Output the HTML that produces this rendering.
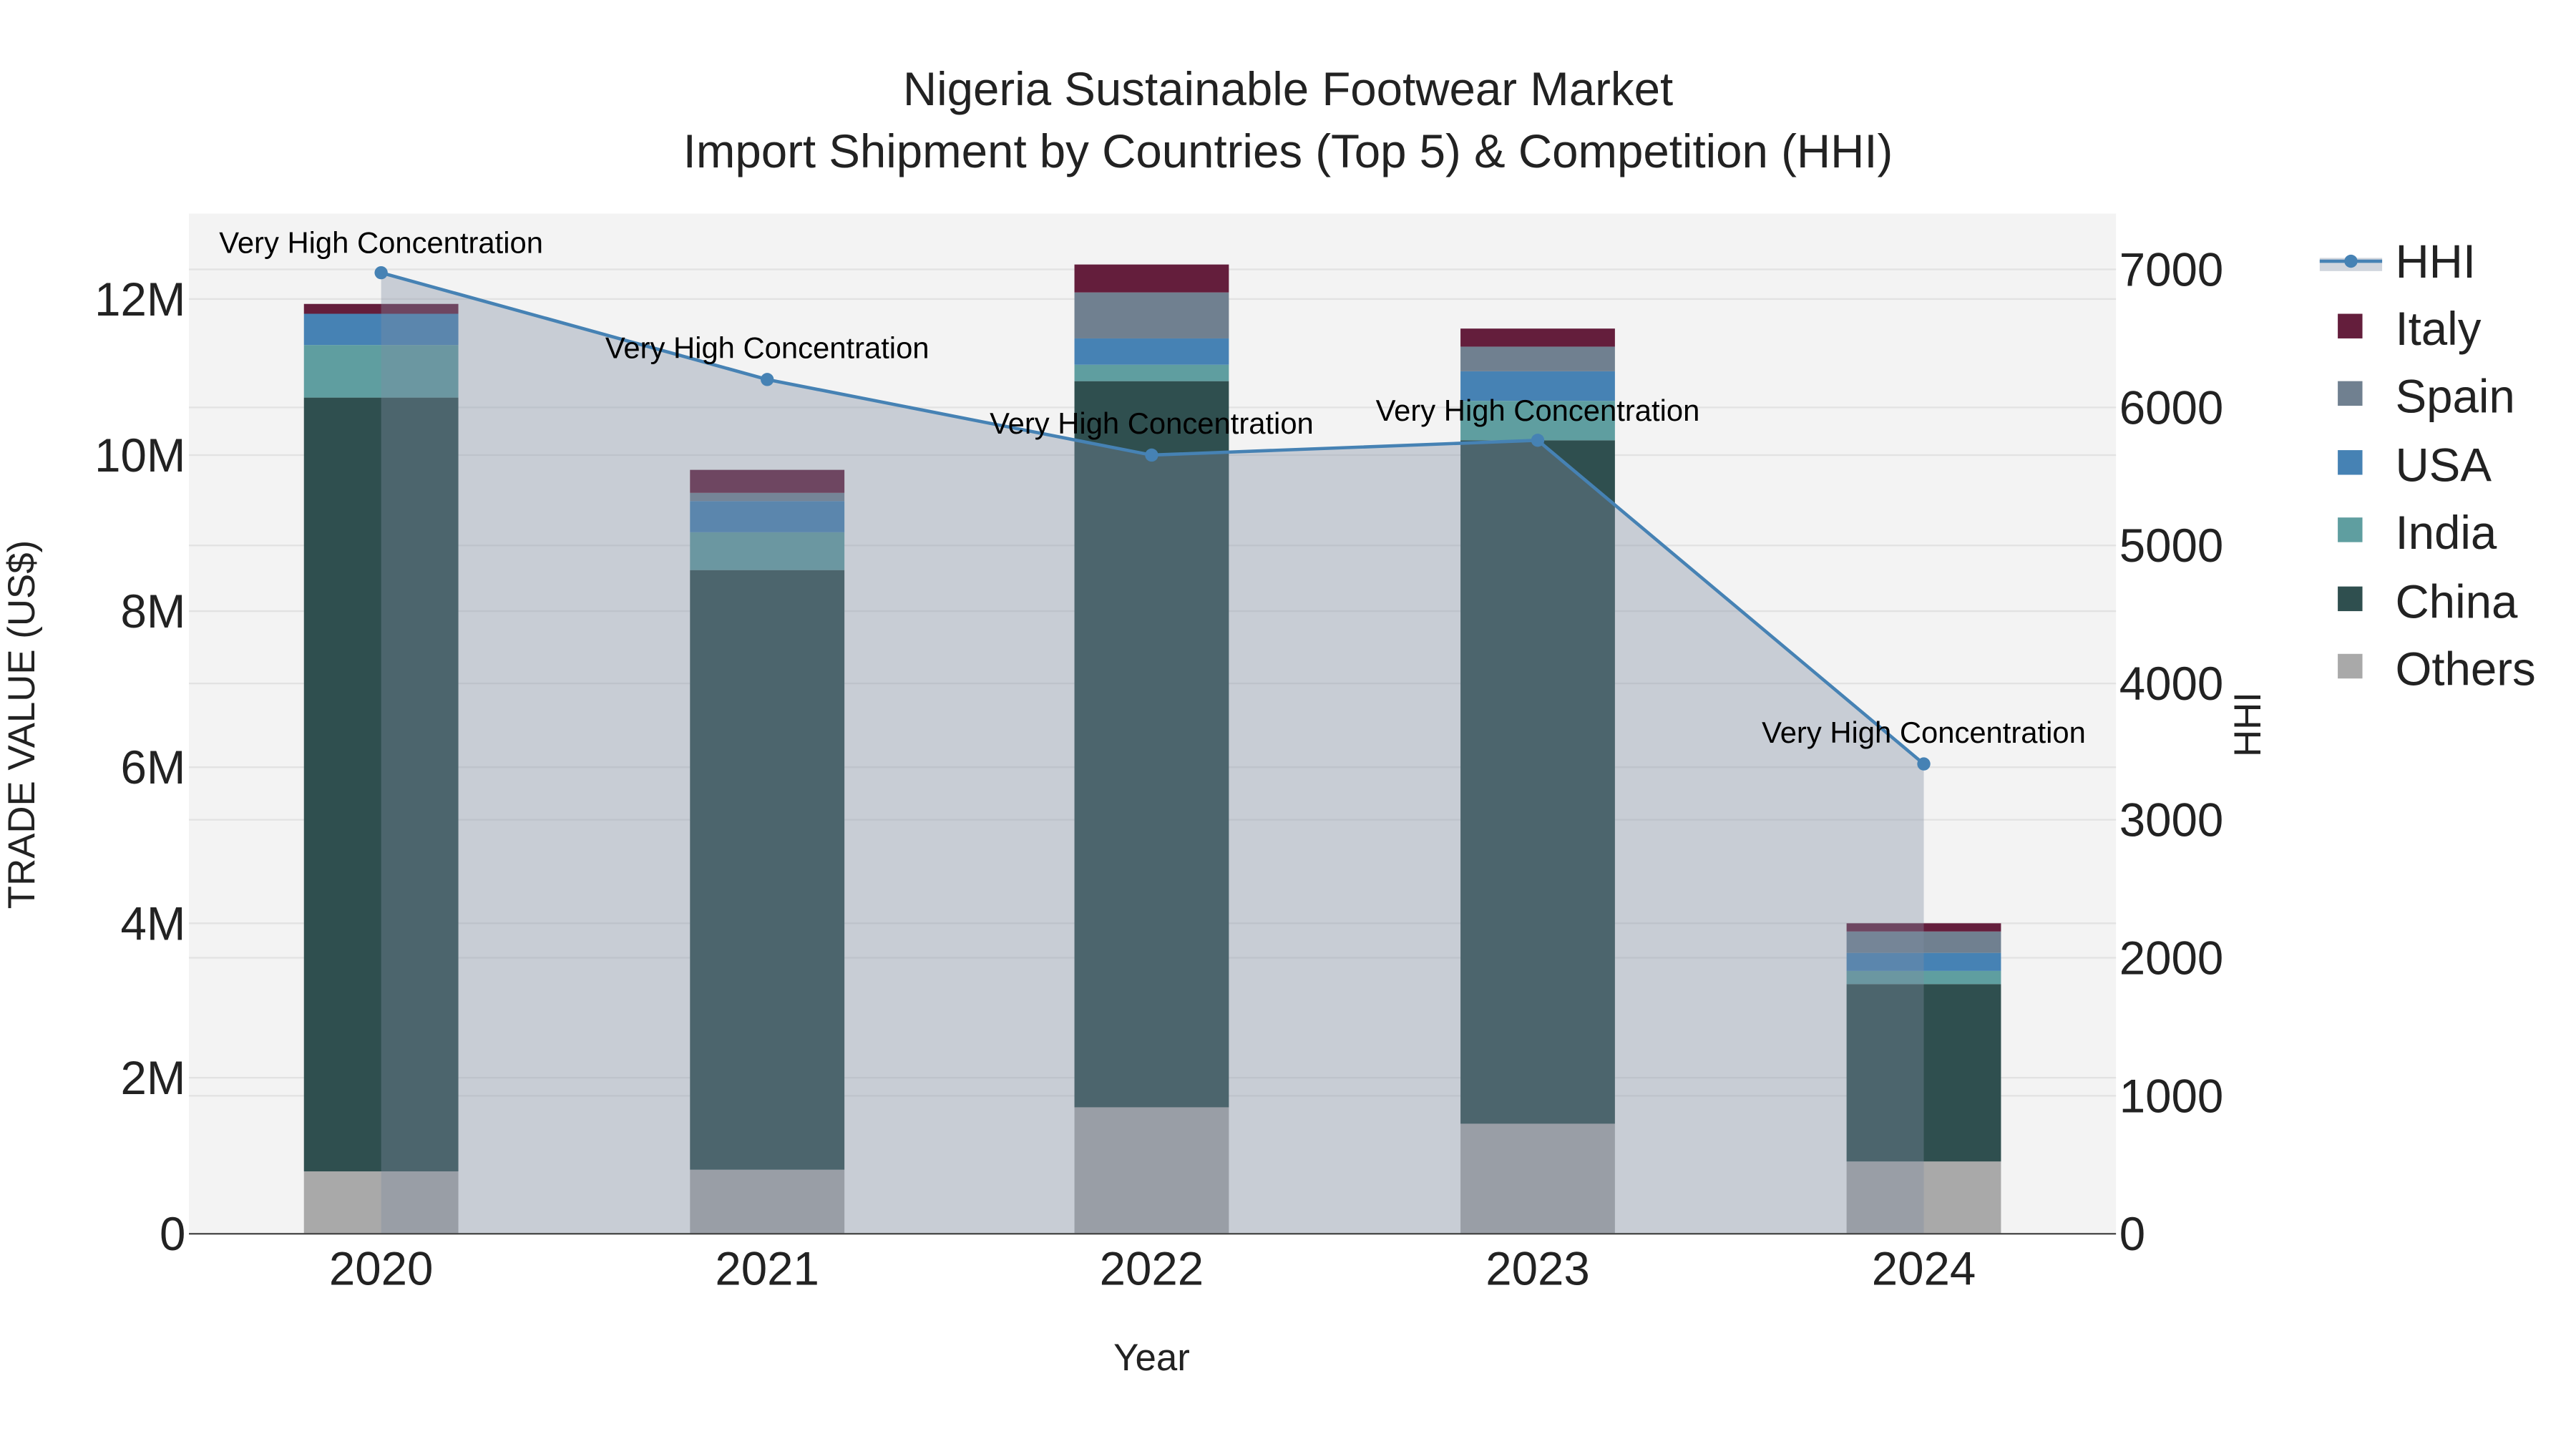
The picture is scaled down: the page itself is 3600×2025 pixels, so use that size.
<!DOCTYPE html>
<html><head><meta charset="utf-8"><style>html,body{margin:0;padding:0;background:#fff}svg{display:block}</style></head>
<body>
<svg width="3600" height="2025" viewBox="0 0 1568 882" preserveAspectRatio="xMinYMin meet" xmlns="http://www.w3.org/2000/svg" font-family="Liberation Sans, sans-serif">
<rect width="1568" height="882" fill="#fff"/>
<rect x="115" y="130" width="1173" height="621" fill="#f3f3f3"/>
<g stroke="#e2e2e2" stroke-width="1">
<line x1="115" x2="1288" y1="656" y2="656"/><line x1="115" x2="1288" y1="562" y2="562"/><line x1="115" x2="1288" y1="467" y2="467"/><line x1="115" x2="1288" y1="372" y2="372"/><line x1="115" x2="1288" y1="277" y2="277"/><line x1="115" x2="1288" y1="182" y2="182"/>
<line x1="115" x2="1288" y1="667" y2="667"/><line x1="115" x2="1288" y1="583" y2="583"/><line x1="115" x2="1288" y1="499" y2="499"/><line x1="115" x2="1288" y1="416" y2="416"/><line x1="115" x2="1288" y1="332" y2="332"/><line x1="115" x2="1288" y1="248" y2="248"/><line x1="115" x2="1288" y1="164" y2="164"/>
</g>
<g>
<rect x="185" y="713" width="94" height="38" fill="#a9a9a9"/><rect x="185" y="242" width="94" height="471" fill="#2f4f4f"/><rect x="185" y="210" width="94" height="32" fill="#5f9ea0"/><rect x="185" y="191" width="94" height="19" fill="#4682b4"/><rect x="185" y="185" width="94" height="6" fill="#641e3c"/>
<rect x="420" y="712" width="94" height="39" fill="#a9a9a9"/><rect x="420" y="347" width="94" height="365" fill="#2f4f4f"/><rect x="420" y="324" width="94" height="23" fill="#5f9ea0"/><rect x="420" y="305" width="94" height="19" fill="#4682b4"/><rect x="420" y="300" width="94" height="5" fill="#708090"/><rect x="420" y="286" width="94" height="14" fill="#641e3c"/>
<rect x="654" y="674" width="94" height="77" fill="#a9a9a9"/><rect x="654" y="232" width="94" height="442" fill="#2f4f4f"/><rect x="654" y="222" width="94" height="10" fill="#5f9ea0"/><rect x="654" y="206" width="94" height="16" fill="#4682b4"/><rect x="654" y="178" width="94" height="28" fill="#708090"/><rect x="654" y="161" width="94" height="17" fill="#641e3c"/>
<rect x="889" y="684" width="94" height="67" fill="#a9a9a9"/><rect x="889" y="268" width="94" height="416" fill="#2f4f4f"/><rect x="889" y="244" width="94" height="24" fill="#5f9ea0"/><rect x="889" y="226" width="94" height="18" fill="#4682b4"/><rect x="889" y="211" width="94" height="15" fill="#708090"/><rect x="889" y="200" width="94" height="11" fill="#641e3c"/>
<rect x="1124" y="707" width="94" height="44" fill="#a9a9a9"/><rect x="1124" y="599" width="94" height="108" fill="#2f4f4f"/><rect x="1124" y="591" width="94" height="8" fill="#5f9ea0"/><rect x="1124" y="580" width="94" height="11" fill="#4682b4"/><rect x="1124" y="567" width="94" height="13" fill="#708090"/><rect x="1124" y="562" width="94" height="5" fill="#641e3c"/>
</g>
<polygon points="232,166 467,231 701,277 936,268 1171,465 1171,751 232,751" fill="rgb(128,141,164)" fill-opacity="0.37"/>
<polyline points="232,166 467,231 701,277 936,268 1171,465" fill="none" stroke="#4682b4" stroke-width="2"/>
<g fill="#4682b4"><circle cx="232" cy="166" r="4"/><circle cx="467" cy="231" r="4"/><circle cx="701" cy="277" r="4"/><circle cx="936" cy="268" r="4"/><circle cx="1171" cy="465" r="4"/></g>
<line x1="115" x2="1288" y1="751" y2="751" stroke="#444" stroke-width="1"/>
<g font-size="18.2" fill="#000" text-anchor="middle">
<text x="232" y="154">Very High Concentration</text><text x="467" y="218">Very High Concentration</text><text x="701" y="264">Very High Concentration</text><text x="936" y="256">Very High Concentration</text><text x="1171" y="452">Very High Concentration</text>
</g>
<g font-size="28.5" fill="#222" text-anchor="end">
<text x="113" y="761">0</text><text x="113" y="666">2M</text><text x="113" y="572">4M</text><text x="113" y="477">6M</text><text x="113" y="382">8M</text><text x="113" y="287">10M</text><text x="113" y="192">12M</text>
</g>
<g font-size="28.5" fill="#222" text-anchor="start">
<text x="1290" y="761">0</text><text x="1290" y="677">1000</text><text x="1290" y="593">2000</text><text x="1290" y="509">3000</text><text x="1290" y="426">4000</text><text x="1290" y="342">5000</text><text x="1290" y="258">6000</text><text x="1290" y="174">7000</text>
</g>
<g font-size="28.5" fill="#222" text-anchor="middle">
<text x="232" y="782">2020</text><text x="467" y="782">2021</text><text x="701" y="782">2022</text><text x="936" y="782">2023</text><text x="1171" y="782">2024</text>
</g>
<text x="701" y="834" font-size="23" fill="#222" text-anchor="middle">Year</text>
<text transform="translate(21,441) rotate(-90)" font-size="23" fill="#222" text-anchor="middle">TRADE VALUE (US$)</text>
<text transform="translate(1376,441) rotate(-90)" font-size="23" fill="#222" text-anchor="middle">HHI</text>
<g font-size="28.5" fill="#222" text-anchor="middle">
<text x="784" y="64">Nigeria Sustainable Footwear Market</text>
<text x="784" y="102">Import Shipment by Countries (Top 5) &amp; Competition (HHI)</text>
</g>
<g font-size="28.5" fill="#222">
<rect x="1412" y="157" width="38" height="8" fill="rgb(128,141,164)" fill-opacity="0.37"/>
<line x1="1412" x2="1450" y1="159" y2="159" stroke="#4682b4" stroke-width="2"/><circle cx="1431" cy="159" r="4" fill="#4682b4"/>
<text x="1458" y="169">HHI</text>
<rect x="1423" y="191" width="15" height="15" fill="#641e3c"/><text x="1458" y="210">Italy</text>
<rect x="1423" y="232" width="15" height="15" fill="#708090"/><text x="1458" y="251">Spain</text>
<rect x="1423" y="274" width="15" height="15" fill="#4682b4"/><text x="1458" y="293">USA</text>
<rect x="1423" y="315" width="15" height="15" fill="#5f9ea0"/><text x="1458" y="334">India</text>
<rect x="1423" y="357" width="15" height="15" fill="#2f4f4f"/><text x="1458" y="376">China</text>
<rect x="1423" y="398" width="15" height="15" fill="#a9a9a9"/><text x="1458" y="417">Others</text>
</g>
</svg>
</body></html>
